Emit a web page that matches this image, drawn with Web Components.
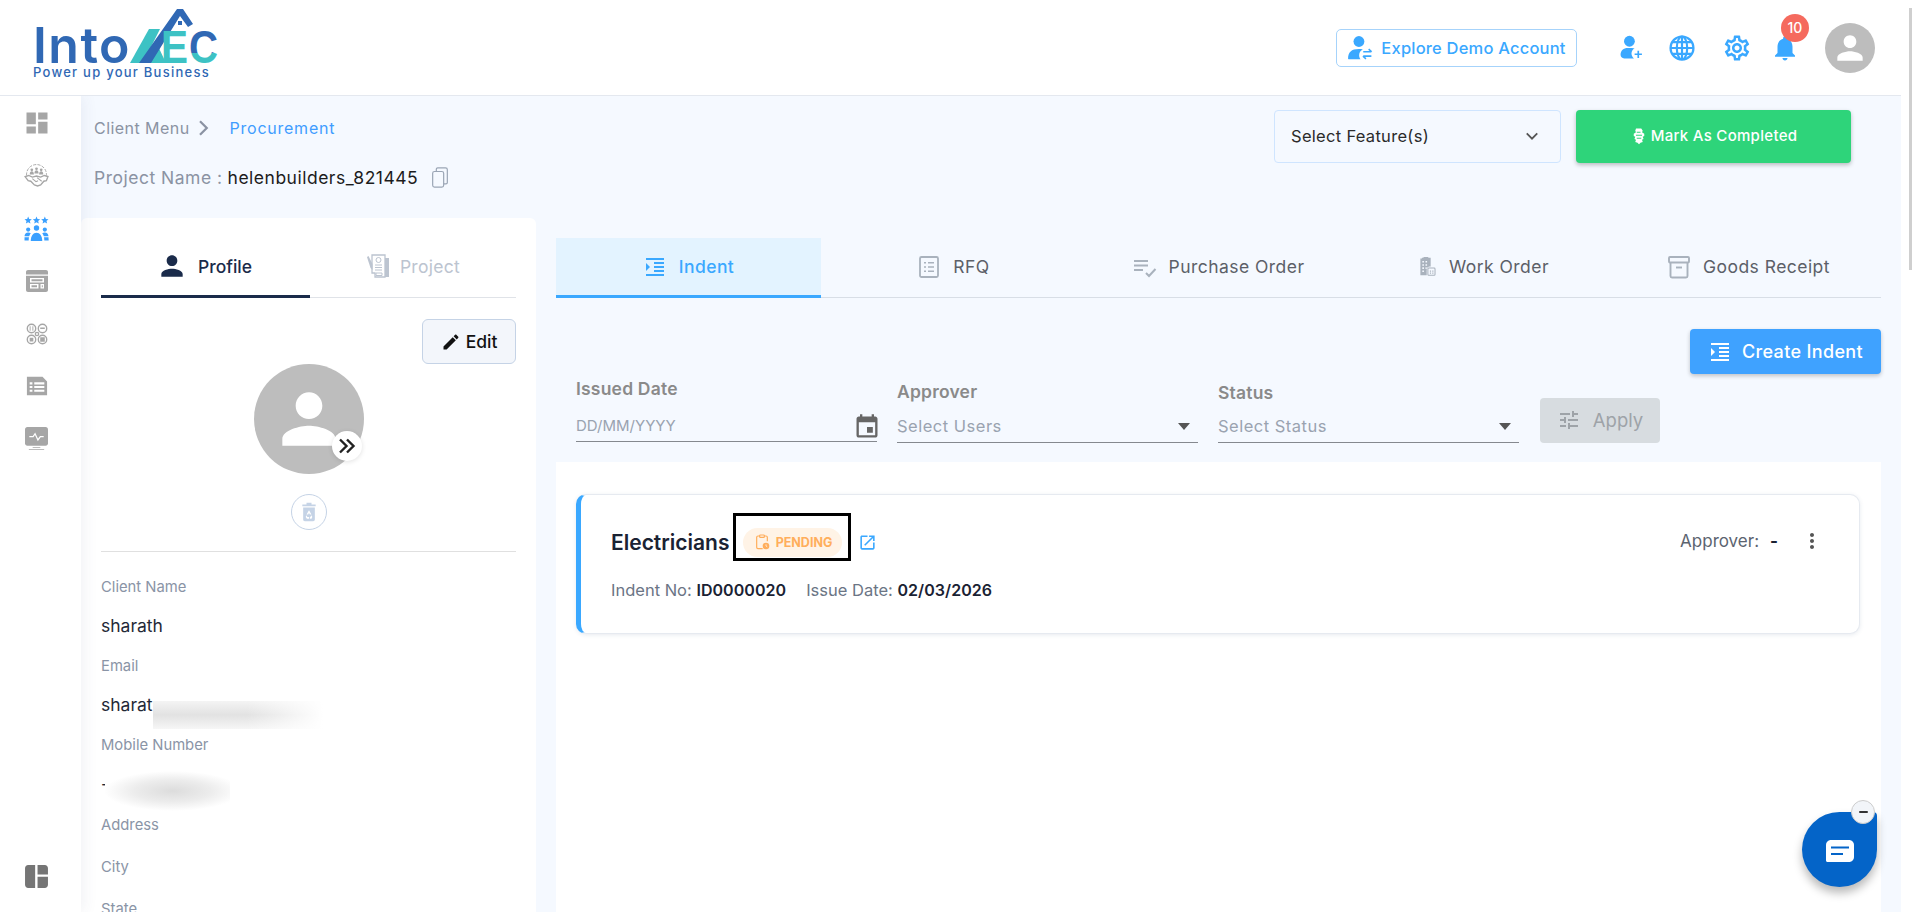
<!DOCTYPE html>
<html lang="en">
<head>
<meta charset="utf-8">
<title>Procurement</title>
<style>
    html, body { margin: 0; height: 912px; overflow: hidden; background: #fff; }
    body { font-family: Inter, "Liberation Sans", sans-serif; color: #1f2937; }
</style>
</head>
<body>
<app-shell>
    <app-header slot="header"></app-header>
    <side-nav slot="nav"></side-nav>
    <top-bar></top-bar>
    <div style="display:flex;gap:20px;padding-right:20px;height:694px;overflow:hidden">
        <profile-card></profile-card>
        <procure-panel></procure-panel>
    </div>
</app-shell>
<chat-fab></chat-fab>

<script>
// 图标集合
const ICONS = {
    person: '<path d="M12 12c2.21 0 4-1.79 4-4s-1.79-4-4-4-4 1.79-4 4 1.79 4 4 4zm0 2c-2.67 0-8 1.34-8 4v2h16v-2c0-2.66-5.33-4-8-4z"/>',
    edit: '<path d="M3 17.25V21h3.75L17.81 9.94l-3.75-3.75L3 17.25zM20.71 7.04c.39-.39.39-1.02 0-1.41l-2.34-2.34c-.39-.39-1.02-.39-1.41 0l-1.83 1.83 3.75 3.75 1.83-1.83z"/>',
    dashboard: '<path d="M3 13h8V3H3v10zm0 8h8v-6H3v6zm10 0h8V11h-8v10zm0-18v6h8V3h-8z"/>',
    event: '<path d="M17 12h-5v5h5v-5zM16 1v2H8V1H6v2H5c-1.11 0-1.99.9-1.99 2L3 19c0 1.1.89 2 2 2h14c1.1 0 2-.9 2-2V5c0-1.1-.9-2-2-2h-1V1h-2zm3 18H5V8h14v11z"/>',
    indent: '<path d="M3 21h18v-2H3v2zM3 8v8l4-4-4-4zm8 9h10v-2H11v2zM3 3v2h18V3H3zm8 6h10V7H11v2zm0 4h10v-2H11v2z"/>',
    tune: '<path d="M3 17v2h6v-2H3zM3 5v2h10V5H3zm10 16v-2h8v-2h-8v-2h-2v6h2zM7 9v2H3v2h4v2h2V9H7zm14 4v-2H11v2h10zm-6-4h2V7h4V5h-4V3h-2v6z"/>',
    open: '<path d="M19 19H5V5h7V3H5c-1.11 0-2 .9-2 2v14c0 1.1.89 2 2 2h14c1.1 0 2-.9 2-2v-7h-2v7zM14 3v2h3.59l-9.83 9.83 1.41 1.41L19 6.41V10h2V3h-7z"/>',
    more: '<path d="M12 8c1.1 0 2-.9 2-2s-.9-2-2-2-2 .9-2 2 .9 2 2 2zm0 2c-1.1 0-2 .9-2 2s.9 2 2 2 2-.9 2-2-.9-2-2-2zm0 6c-1.1 0-2 .9-2 2s.9 2 2 2 2-.9 2-2-.9-2-2-2z"/>',
    bell: '<path d="M12 22c1.1 0 2-.9 2-2h-4c0 1.1.89 2 2 2zm6-6v-5c0-3.07-1.64-5.64-4.5-6.32V4c0-.83-.67-1.5-1.5-1.5s-1.5.67-1.5 1.5v.68C7.63 5.36 6 7.92 6 11v5l-2 2v1h16v-1l-2-2z"/>',
    gear: '<path d="M19.43 12.98c.04-.32.07-.64.07-.98 0-.34-.03-.66-.07-.98l2.11-1.65c.19-.15.24-.42.12-.64l-2-3.46c-.09-.16-.26-.25-.44-.25-.06 0-.12.01-.17.03l-2.49 1c-.52-.4-1.08-.73-1.69-.98l-.38-2.65C14.46 2.18 14.25 2 14 2h-4c-.25 0-.46.18-.49.42l-.38 2.65c-.61.25-1.17.59-1.69.98l-2.49-1c-.06-.02-.12-.03-.18-.03-.17 0-.34.09-.43.25l-2 3.46c-.13.22-.07.49.12.64l2.11 1.65c-.04.32-.07.65-.07.98 0 .33.03.66.07.98l-2.11 1.65c-.19.15-.24.42-.12.64l2 3.46c.09.16.26.25.44.25.06 0 .12-.01.17-.03l2.49-1c.52.4 1.08.73 1.69.98l.38 2.65c.03.24.24.42.49.42h4c.25 0 .46-.18.49-.42l.38-2.65c.61-.25 1.17-.59 1.69-.98l2.49 1c.06.02.12.03.18.03.17 0 .34-.09.43-.25l2-3.46c.12-.22.07-.49-.12-.64l-2.11-1.65zm-1.98-1.71c.04.31.05.52.05.73 0 .21-.02.43-.05.73l-.14 1.13.89.7 1.08.84-.7 1.21-1.27-.51-1.04-.42-.9.68c-.43.32-.84.56-1.25.73l-1.06.43-.16 1.13-.2 1.35h-1.4l-.19-1.35-.16-1.13-1.06-.43c-.43-.18-.83-.41-1.23-.71l-.91-.7-1.06.43-1.27.51-.7-1.21 1.08-.84.89-.7-.14-1.13c-.03-.31-.05-.54-.05-.74s.02-.43.05-.73l.14-1.13-.89-.7-1.08-.84.7-1.21 1.27.51 1.04.42.9-.68c.43-.32.84-.56 1.25-.73l1.06-.43.16-1.13.2-1.35h1.39l.19 1.35.16 1.13 1.06.43c.43.18.83.41 1.23.71l.91.7 1.06-.43 1.27-.51.7 1.21-1.07.85-.89.7.14 1.13zM12 8c-2.21 0-4 1.79-4 4s1.79 4 4 4 4-1.79 4-4-1.79-4-4-4zm0 6c-1.1 0-2-.9-2-2s.9-2 2-2 2 .9 2 2-.9 2-2 2z"/>',
    globe: '<g fill="none" stroke="currentColor" stroke-width="2"><circle cx="12" cy="12" r="10.6"/><ellipse cx="12" cy="12" rx="4.8" ry="10.6"/><path d="M12 1.4v21.2M1.4 12h21.2M3 6.6h18M3 17.4h18"/></g>',
    userSwap: '<circle cx="11" cy="6" r="5"/><path d="M1 22c0-6 3-9 10-9 1.4 0 2.6.1 3.6.4-2.2.7-3.4 3.2-3.4 5.2 0 1.5.6 2.7 1.3 3.8H2.5C1.6 22.4 1 22.4 1 22z"/><path d="M15 15.5h7.5M20 13l2.8 2.5M15 19.5h7.5M17.5 22l-2.8-2.5" fill="none" stroke="currentColor" stroke-width="1.4"/>',
    userPlus: '<circle cx="10" cy="6" r="5.2"/><path d="M1.5 19c0-4 2.8-6.5 7-6.5h4c1 0 1.8.2 2.5.5-1.9.9-3 2.7-3 4.800 0 2 1 3.7 2.4 4.7H5c-2 0-3.500-1.500-3.500-3.500z"/><path d="M15 18.5h7M18.5 15v7" fill="none" stroke="currentColor" stroke-width="1.6"/>',
    copy: '<g fill="none" stroke="currentColor" stroke-width="1.3"><rect x="4" y="6" width="12" height="17" rx="2"/><path d="M8 6V3.5C8 2.7 8.7 2 9.5 2H18c1.1 0 2 .9 2 2v14c0 .8-.7 1.5-1.5 1.5H16"/></g>',
    chevronRight: '<path d="M8 3l9 9-9 9" fill="none" stroke="currentColor" stroke-width="3"/>',
    chevronDown: '<path d="M5 8.5l7 7 7-7" fill="none" stroke="currentColor" stroke-width="2.4"/>',
    handshakeTeam: '<circle cx="7.5" cy="6.5" r="1.3"/><circle cx="12" cy="5.5" r="1.3"/><circle cx="16.5" cy="6.5" r="1.3"/><path d="M5.5 11c0-2 .9-3 2-3s2 1 2 3zm4.5-1c0-2 .9-3 2-3s2 1 2 3zm4.5 1c0-2 .9-3 2-3s2 1 2 3z"/><path d="M2.5 12A9.5 9.5 0 0 1 12 1.5 9.5 9.5 0 0 1 21.5 12" fill="none" stroke="currentColor" stroke-width=".9" stroke-dasharray="3 1.2"/><path d="M1 13l3.5-1 3.5 1.5 4-1 4 1 3.5-1.5 3.5 1-1.5 4-2.5.5-3 3.5-3 1-3-1-3.5-3.5-2.5-.5z" fill="none" stroke="currentColor" stroke-width="1.3"/><path d="M8 15l3.5 3 2-1M12.5 14l4.5 3.5" fill="none" stroke="currentColor" stroke-width="1"/>',
    teamStars: '<path d="M4 .5l1 2.4 2.5.2-1.9 1.6.6 2.5L4 5.9 1.8 7.2l.6-2.500L.5 3.1 3 2.9zM12 .5l1 2.4 2.5.2-1.9 1.6.6 2.5L12 5.9 9.8 7.2l.6-2.500-1.900-1.600 2.500-.2zM20 .5l1 2.4 2.5.2-1.9 1.6.6 2.5L20 5.9l-2.2 1.3.6-2.500-1.900-1.600 2.500-.2z"/><circle cx="12" cy="11.5" r="2.6"/><path d="M6.5 24c0-5 2.3-8 5.5-8s5.5 3 5.5 8z"/><circle cx="4" cy="13" r="2"/><path d="M.5 19.5C.5 17 2 15.8 4 15.8c1 0 1.8.3 2.5.8-.8 1-1.2 1.9-1.5 2.9z"/><circle cx="20" cy="13" r="2"/><path d="M23.5 19.5C23.5 17 22 15.8 20 15.8c-1 0-1.8.3-2.5.8.8 1 1.2 1.9 1.5 2.9z"/><path d="M.5 20.5h4.3c-.2 1-.3 2-.3 3H.5zM23.5 20.5h-4.3c.2 1 .3 2 .3 3h4.2z"/>',
    webLayout: '<path fill-rule="evenodd" d="M3 1h18c1.1 0 2 .9 2 2v18c0 1.1-.9 2-2 2H3c-1.1 0-2-.9-2-2V3c0-1.1.9-2 2-2zM1 5.5v1.2h22V5.5zM5 9v4.5h14V9zm0 6v4.5h8.5V15zm10.500 0v4.5H19V15zM6.500 10.300h11v1.900h-11zm0 6h5.500v1.900H6.500zm10.300 0h1v1.900h-1z"/>',
    nodes: '<g fill="none" stroke="currentColor" stroke-width="1.5"><circle cx="6" cy="6" r="4.6"/><circle cx="18" cy="6" r="4.6"/><circle cx="6" cy="18" r="4.6"/><circle cx="18" cy="18" r="4.6"/><circle cx="12" cy="12" r="1.8"/></g><path d="M4 3.5h1v5H4zm3 0h1v5H7zM15.5 5h5v1.5h-5zM4 16h4v4.2H4zM15.5 15.5h5v5h-5z"/>',
    listFile: '<path fill-rule="evenodd" d="M1 2h17l5 5v15H1zM4 8v2.3h3V8zm5 0v2.3h11V8zM4 12v2.3h3V12zm5 0v2.3h11V12zM4 16v2.3h3V16zm5 0v2.3h11V16z"/>',
    monitor: '<path fill-rule="evenodd" d="M2.5 0h19C22.900 0 24 1.1 24 2.5V17c0 1.4-1.1 2.5-2.5 2.5h-19C1.1 19.5 0 18.4 0 17V2.5C0 1.1 1.1 0 2.5 0z"/><path d="M4.5 10h4l2-3 3 6.5 2.5-3.5h3.5" fill="none" stroke="#fff" stroke-width="1.3"/><path d="M8 21h8v.8H8zM4 23h16v.7H4z"/>',
    panels: '<path d="M4 1h6.7v22H4c-1.7 0-3-1.3-3-3V4c0-1.7 1.3-3 3-3zM13 1h7c1.7 0 3 1.3 3 3v6H13zM13 12.3h10V20c0 1.7-1.3 3-3 3h-7z"/>',
    projectDoc: '<path d="M6 1h13v22H9V19H6z" fill="none" stroke="currentColor" stroke-width="1.3"/><path d="M19 4h4v19h-4z"/><circle cx="12.5" cy="6" r="2.5" fill="none" stroke="currentColor"/><path d="M9 11h7M9 13.5h7M9 16h7M10 19h6v2.5h-6z" fill="none" stroke="currentColor"/><path d="M1 3l1.5-1 4 8v6l-2-2z"/>',
    listBox: '<rect x="3" y="2" width="18" height="20" rx="1.5" fill="none" stroke="currentColor" stroke-width="1.8"/><path d="M7 7h2v1.6H7zm4 0h6v1.6h-6zM7 11.2h2v1.6H7zm4 0h6v1.6h-6zM7 15.4h2V17H7zm4 0h6V17h-6z"/>',
    checkList: '<path d="M1 5h14v2H1zm0 4.5h14v2H1zM1 14h9v2H1z"/><path d="M13 18l3 3 6.5-7" fill="none" stroke="currentColor" stroke-width="2"/>',
    buildingDoc: '<path fill-rule="evenodd" d="M5 1h2V0h6v1h3v11h-2a4 4 0 0 0-3 4v7H3V2h2zM5.5 5v2h2V5zm4 0v2h2V5zm0 4v2h2V9zm-4 0v2h2V9zm0 4v2h2v-2zm4 0v2H11v-2zm-4 4v2h2v-2z"/><rect x="12.5" y="14" width="9" height="9" rx="1" fill="none" stroke="currentColor" stroke-width="1.3"/><path d="M15 17h1.5v1.5H15zm3 0h1.5v1.5H18zm-3 2.5h1.5V21H15zm3 0h1.5V21H18z"/>',
    archive: '<g fill="none" stroke="currentColor" stroke-width="1.9"><path d="M3.5 7.5V21c0 .8.7 1.5 1.5 1.5h14c.8 0 1.5-.7 1.5-1.5V7.5"/><rect x="2" y="2" width="20" height="5.5" rx="1"/><path d="M9 12.5h6"/></g>',
    pending: '<g fill="none" stroke="currentColor" stroke-width="1.8"><path d="M9 3H6C4.9 3 4 3.9 4 5v15c0 1.1.9 2 2 2h7M15 3h3c1.1 0 2 .9 2 2v6"/><rect x="8.5" y="1.5" width="7" height="3.5" rx="1"/></g><circle cx="18" cy="18" r="5"/><path d="M18 15.500V18l1.800 1.200" fill="none" stroke="#fff3e6" stroke-width="1.2"/>',
    recycleBin: '<path fill-rule="evenodd" d="M9 1h6v2h5v2H4V3h5zM5 6.5h14V21c0 1.1-.9 2-2 2H7c-1.1 0-2-.9-2-2zM12 10l-3 5h2l1-1.800L13 15h2zM9 16l-1 2 1.500 2H12v-2h-2zm6 0l-1.500 2H13v2h2l1-2z"/>',
    award: '<path d="M8 2h7l2 3-1 2 3 2v3l-2 1 1 3-2 1 1 3-3 1-2 2-2-2-3-1 1-3-2-1 1-3-2-1V9l3-2-1-2z"/><path d="M9 7h5M8 11h8M9 15h6" stroke="#2ed47a" stroke-width="1.3"/>'
};

// 单个图标
class UiIcon extends HTMLElement {
    constructor() {
        super();
        this.attachShadow({ mode: 'open' });
    }

    connectedCallback() {
        const size = this.getAttribute('size') || 24;
        const name = this.getAttribute('name');
        const color = this.getAttribute('color') || 'currentColor';
        this.shadowRoot.innerHTML = `
            <style>
                :host { display: inline-flex; flex: none; color: ${color}; line-height: 0; }
                svg { display: block; fill: currentColor; }
            </style>
            <svg width="${size}" height="${size}" viewBox="0 0 24 24">${ICONS[name] || ''}</svg>
        `;
    }
}

// 页面骨架
class AppShell extends HTMLElement {
    constructor() {
        super();
        this.attachShadow({ mode: 'open' });
        this.shadowRoot.innerHTML = `
            <style>
                :host { display: block; height: 912px; }
                .frame { display: flex; height: 912px; overflow: hidden; background: #fff; }
                .app { width: 1901px; flex: none; display: flex; flex-direction: column; }
                .row { flex: 1; display: flex; min-height: 0; }
                main { flex: 1; min-width: 0; background: #f5f9ff; }
                .scroll { flex: 1; padding: 8px 0 0 8px; }
                .thumb { width: 3px; height: 262px; background: #cfcfcf; }
            </style>
            <div class="frame">
                <div class="app">
                    <slot name="header"></slot>
                    <div class="row">
                        <slot name="nav"></slot>
                        <main><slot></slot></main>
                    </div>
                </div>
                <div class="scroll"><div class="thumb"></div></div>
            </div>
        `;
    }
}

class AppHeader extends HTMLElement {
    constructor() {
        super();
        this.attachShadow({ mode: 'open' });
        this.shadowRoot.innerHTML = `
            <style>
                :host { display: block; position: relative; z-index: 2; }
                .bar {
                    height: 95px;
                    border-bottom: 1px solid #e4e8ef;
                    background: #fff;
                    display: flex;
                    align-items: center;
                    padding: 0 26px 0 33px;
                    color: #3aa8ff;
                }
                .logo { align-self: flex-start; padding-top: 8px; }
                .logo-top { display: flex; align-items: flex-end; height: 58px; }
                .into {
                    width: 97px;
                    font-size: 50px;
                    font-weight: 600;
                    line-height: 40px;
                    margin-bottom: 1px;
                    color: #3068b4;
                    letter-spacing: 1.5px;
                }
                .logo svg { display: block; }
                .tag {
                    font-size: 13px;
                    line-height: 12px;
                    font-weight: 500;
                    letter-spacing: 1.25px;
                    color: #3068b4;
                    white-space: nowrap;
                }
                .spacer { flex: 1; }
                .demo {
                    width: 241px;
                    height: 38px;
                    box-sizing: border-box;
                    border: 1px solid #a6d3fb;
                    border-radius: 5px;
                    display: flex;
                    align-items: center;
                    justify-content: center;
                    gap: 8px;
                    font-size: 16.5px;
                    letter-spacing: 0.2px;
                    font-weight: 500;
                    white-space: nowrap;
                }
                .ic { display: flex; }
                .bell { position: relative; margin-left: 18px; display: flex; }
                .badge {
                    position: absolute;
                    left: 11px;
                    top: -19px;
                    width: 28px;
                    height: 28px;
                    border-radius: 50%;
                    background: #f56a5e;
                    color: #fff;
                    font-size: 14px;
                    font-weight: 500;
                    display: flex;
                    align-items: center;
                    justify-content: center;
                }
                .avatar {
                    margin-left: 25px;
                    width: 50px;
                    height: 50px;
                    border-radius: 50%;
                    background: #bdbdbd;
                    display: flex;
                    align-items: center;
                    justify-content: center;
                }
            </style>
            <div class="bar">
                <div class="logo">
                    <div class="logo-top">
                        <span class="into">Into</span>
                        <svg width="90" height="58" viewBox="130 8 90 58">
                            <defs>
                                <linearGradient id="cfill" x1="0" y1="0" x2="0" y2="1">
                                    <stop offset="0.62" stop-color="#3068b4"/>
                                    <stop offset="0.62" stop-color="#3dc2c4"/>
                                </linearGradient>
                            </defs>
                            <polygon points="130,63 149,29 160,29 143,63" fill="#3dc2c4"/>
                            <polygon points="157,44 166,63 147,63" fill="#3dc2c4"/>
                            <polygon points="139,63 177,9 183,9 193,24 188,27 180,16 151,63" fill="#3068b4"/>
                            <rect x="178" y="21" width="4" height="4" fill="#3068b4"/>
                            <text x="161" y="63" font-size="47" font-weight="700" fill="#3dc2c4" font-family="Liberation Sans" textLength="27" lengthAdjust="spacingAndGlyphs">E</text>
                            <text x="189" y="63" font-size="47" font-weight="700" fill="url(#cfill)" font-family="Liberation Sans" textLength="29" lengthAdjust="spacingAndGlyphs">C</text>
                        </svg>
                    </div>
                    <div class="tag">Power up your Business</div>
                </div>
                <div class="spacer"></div>
                <div class="demo"><ui-icon name="userSwap" size="26"></ui-icon>Explore Demo Account</div>
                <div class="ic" style="margin-left:42px"><ui-icon name="userPlus" size="25"></ui-icon></div>
                <div class="ic" style="margin-left:25px"><ui-icon name="globe" size="26"></ui-icon></div>
                <div class="ic" style="margin-left:27px"><ui-icon name="gear" size="30"></ui-icon></div>
                <div class="bell"><ui-icon name="bell" size="30"></ui-icon><span class="badge">10</span></div>
                <div class="avatar"><ui-icon name="person" size="38" color="#fff"></ui-icon></div>
            </div>
        `;
    }
}

class SideNav extends HTMLElement {
    constructor() {
        super();
        this.attachShadow({ mode: 'open' });
        this.shadowRoot.innerHTML = `
            <style>
                :host {
                    display: flex;
                    flex-direction: column;
                    width: 81px;
                    flex: none;
                    background: #fff;
                    box-shadow: 3px 0 14px rgba(50, 70, 120, 0.07);
                    position: relative;
                    z-index: 1;
                    color: #a6a6a6;
                }
                .item { height: 52.6px; display: flex; align-items: center; justify-content: center; padding-right: 8px; }
                .first { margin-top: 1px; }
                .bottom { margin-top: auto; margin-bottom: 9px; color: #757575; }
            </style>
            <div class="item first"><ui-icon name="dashboard" size="28"></ui-icon></div>
            <div class="item"><ui-icon name="handshakeTeam" size="25"></ui-icon></div>
            <div class="item"><ui-icon name="teamStars" size="25" color="#3aa0ff"></ui-icon></div>
            <div class="item"><ui-icon name="webLayout" size="24"></ui-icon></div>
            <div class="item"><ui-icon name="nodes" size="22"></ui-icon></div>
            <div class="item"><ui-icon name="listFile" size="22"></ui-icon></div>
            <div class="item"><ui-icon name="monitor" size="23"></ui-icon></div>
            <div class="item bottom"><ui-icon name="panels" size="25"></ui-icon></div>
        `;
    }
}

class TopBar extends HTMLElement {
    constructor() {
        super();
        this.attachShadow({ mode: 'open' });
        this.shadowRoot.innerHTML = `
            <style>
                :host {
                    display: flex;
                    height: 122px;
                    padding: 14px 50px 0 13px;
                    box-sizing: border-box;
                    font-size: 16px;
                    color: #8b93a3;
                }
                .left { flex: 1; }
                .crumb { display: flex; align-items: center; height: 20px; margin-top: 8px; white-space: nowrap; letter-spacing: 0.45px; }
                .crumb ui-icon { margin: 0 18px 0 4px; }
                .crumb b { font-weight: 400; color: #3f9dff; letter-spacing: 0.75px; }
                .project { display: flex; align-items: center; height: 24px; margin-top: 27px; white-space: nowrap; font-size: 17.5px; letter-spacing: 0.5px; }
                .project b { font-weight: 400; color: #1c1c1c; margin-left: 5px; }
                .project ui-icon { margin-left: 11px; }
                .select {
                    width: 287px;
                    height: 53px;
                    box-sizing: border-box;
                    border: 1px solid #cfe5ff;
                    border-radius: 4px;
                    display: flex;
                    align-items: center;
                    padding: 0 19px 2px 16px;
                    color: #2b2b2b;
                    font-size: 16.5px;
                    letter-spacing: 0.3px;
                    justify-content: space-between;
                }
                .done {
                    width: 275px;
                    height: 53px;
                    margin-left: 15px;
                    background: #2ed47a;
                    border-radius: 4px;
                    box-shadow: 0 2px 4px rgba(0, 0, 0, 0.25);
                    color: #fff;
                    display: flex;
                    align-items: center;
                    justify-content: center;
                    gap: 3px;
                    padding-bottom: 2px;
                    box-sizing: border-box;
                    font-size: 15px;
                    letter-spacing: 0.3px;
                    font-weight: 500;
                }
            </style>
            <div class="left">
                <div class="crumb">Client Menu<ui-icon name="chevronRight" size="18"></ui-icon><b>Procurement</b></div>
                <div class="project">Project Name :<b>helenbuilders_821445</b><ui-icon name="copy" size="22" color="#9aa5b5"></ui-icon></div>
            </div>
            <div class="select">Select Feature(s)<ui-icon name="chevronDown" size="18" color="#555"></ui-icon></div>
            <div class="done"><ui-icon name="award" size="18"></ui-icon>Mark As Completed</div>
        `;
    }
}

// 左侧资料卡的一行
class InfoField extends HTMLElement {
    constructor() {
        super();
        this.attachShadow({ mode: 'open' });
        this.shadowRoot.innerHTML = `
            <style>
                :host { display: block; height: var(--h, 42px); position: relative; }
                .label { font-size: 14.8px; line-height: 20px; color: #8a94a6; }
                .value { font-size: 17.5px; line-height: 22px; color: #1f2937; margin-top: 18px; }
            </style>
            <div class="label"><slot name="label"></slot></div>
            <div class="value"><slot></slot></div>
        `;
    }
}

class ProfileCard extends HTMLElement {
    constructor() {
        super();
        this.attachShadow({ mode: 'open' });
        this.shadowRoot.innerHTML = `
            <style>
                :host {
                    display: block;
                    width: 455px;
                    flex: none;
                    box-sizing: border-box;
                    background: #fff;
                    padding: 0 20px;
                    border-radius: 6px 6px 0 0;
                    overflow: hidden;
                    font-size: 17.5px;
                }
                .tabs { display: flex; height: 80px; border-bottom: 1px solid #e0e3e8; box-sizing: border-box; }
                .tab { flex: 1; display: flex; align-items: center; justify-content: center; gap: 10px; padding-top: 19px; font-weight: 500; margin-bottom: -1px; box-sizing: border-box; }
                .tab.on { color: #1a2b4a; border-bottom: 3px solid #1a2b4a; padding-right: 3px; }
                .tab.off { color: #bcc4d0; border-bottom: 3px solid transparent; font-weight: 400; letter-spacing: 0.3px; }
                .edit-row { display: flex; justify-content: flex-end; margin-top: 21px; }
                .edit {
                    width: 94px;
                    height: 45px;
                    box-sizing: border-box;
                    background: #f3f6fb;
                    border: 1px solid #c5d3e6;
                    border-radius: 6px;
                    display: flex;
                    align-items: center;
                    justify-content: center;
                    gap: 5px;
                    color: #111;
                    font-weight: 500;
                }
                .pic {
                    width: 110px;
                    height: 110px;
                    margin: 0 auto;
                    border-radius: 50%;
                    background: #bdbdbd;
                    position: relative;
                    display: flex;
                    align-items: center;
                    justify-content: center;
                }
                .next {
                    position: absolute;
                    right: 2px;
                    bottom: 13px;
                    width: 30px;
                    height: 30px;
                    border-radius: 50%;
                    background: #fff;
                    box-shadow: 0 1px 5px rgba(0, 0, 0, 0.12);
                    display: flex;
                    align-items: center;
                    justify-content: center;
                }
                .bin {
                    width: 36px;
                    height: 36px;
                    margin: 20px auto 0;
                    box-sizing: border-box;
                    border: 1px solid #c5d3e6;
                    border-radius: 50%;
                    display: flex;
                    align-items: center;
                    justify-content: center;
                }
                hr { border: 0; border-top: 1px solid #e0e0e0; margin: 21px 0 25px; }
                .smudge { position: absolute; }
                .smudge.mail {
                    left: 52px;
                    top: 45px;
                    width: 170px;
                    height: 28px;
                    background:
                        linear-gradient(90deg, rgba(255,255,255,0) 55%, #fff 100%),
                        linear-gradient(180deg, #f4f4f4 0%, #e2e2e2 50%, #f6f6f6 100%);
                }
                .smudge.phone {
                    left: 4px;
                    top: 36px;
                    width: 125px;
                    height: 40px;
                    background: radial-gradient(ellipse 55% 50% at 54% 50%, #dcdcdc 0%, #ececec 55%, #fff 100%);
                }
            </style>
            <div class="tabs">
                <div class="tab on"><ui-icon name="person" size="32"></ui-icon>Profile</div>
                <div class="tab off"><ui-icon name="projectDoc" size="24"></ui-icon>Project</div>
            </div>
            <div class="edit-row"><div class="edit"><ui-icon name="edit" size="20"></ui-icon>Edit</div></div>
            <div class="pic">
                <ui-icon name="person" size="80" color="#fff"></ui-icon>
                <div class="next"><svg width="18" height="16" viewBox="0 0 18 16" fill="none" stroke="#222" stroke-width="2.4"><path d="M2 1.5L8.5 8 2 14.5M9 1.5L15.5 8 9 14.5"/></svg></div>
            </div>
            <div class="bin"><ui-icon name="recycleBin" size="20" color="#c5d3e6"></ui-icon></div>
            <hr>
            <info-field style="--h:79px"><span slot="label">Client Name</span>sharath</info-field>
            <info-field style="--h:79px"><span slot="label">Email</span>sharat<div class="smudge mail"></div></info-field>
            <info-field style="--h:80px"><span slot="label">Mobile Number</span>-<div class="smudge phone"></div></info-field>
            <info-field><span slot="label">Address</span></info-field>
            <info-field><span slot="label">City</span></info-field>
            <info-field style="height:36px;overflow:hidden"><span slot="label">State</span></info-field>
        `;
    }
}

class ProcTab extends HTMLElement {
    constructor() {
        super();
        this.attachShadow({ mode: 'open' });
    }

    connectedCallback() {
        const active = this.hasAttribute('active');
        this.shadowRoot.innerHTML = `
            <style>
                :host {
                    flex: 1;
                    display: flex;
                    align-items: center;
                    justify-content: center;
                    gap: 12px;
                    font-size: 17.5px;
                    letter-spacing: 0.45px;
                    height: 60px;
                    box-sizing: border-box;
                    margin-bottom: -1px;
                    color: ${active ? '#3aa8ff' : '#5c6068'};
                    font-weight: ${active ? 500 : 400};
                    background: ${active ? '#e3f3ff' : 'transparent'};
                    border-bottom: 3px solid ${active ? '#3aa8ff' : 'transparent'};
                }
            </style>
            <ui-icon name="${this.getAttribute('icon')}" size="${this.getAttribute('size') || 24}" color="${active ? '#3aa8ff' : '#a9b2bd'}"></ui-icon>
            <slot></slot>
        `;
    }
}

class FilterField extends HTMLElement {
    constructor() {
        super();
        this.attachShadow({ mode: 'open' });
    }

    connectedCallback() {
        const isDate = this.getAttribute('kind') === 'date';
        const trail = isDate
            ? '<ui-icon name="event" size="28" color="#666"></ui-icon>'
            : '<span class="arrow"></span>';
        this.shadowRoot.innerHTML = `
            <style>
                :host { display: block; width: 301px; flex: none; }
                .label { font-size: 17.5px; letter-spacing: 0.2px; line-height: 20px; font-weight: 600; color: #8a8a8a; }
                .input {
                    display: flex;
                    align-items: flex-end;
                    justify-content: space-between;
                    border-bottom: 1px solid #85898f;
                    height: ${this.getAttribute('h') || 42}px;
                    box-sizing: border-box;
                    padding-bottom: ${isDate ? 5 : 6}px;
                    font-size: ${isDate ? '15px' : '16.5px'};
                    letter-spacing: ${isDate ? '0' : '0.5px'};
                    line-height: 20px;
                    color: #9aa3b0;
                }
                ui-icon { margin: 0 -4px -5px 0; }
                .arrow {
                    width: 0;
                    height: 0;
                    border-left: 6.5px solid transparent;
                    border-right: 6.5px solid transparent;
                    border-top: 7px solid #555;
                    margin: 0 8px 6px 0;
                }
            </style>
            <div class="label">${this.getAttribute('label')}</div>
            <div class="input"><span>${this.getAttribute('placeholder')}</span>${trail}</div>
        `;
    }
}

class IndentCard extends HTMLElement {
    constructor() {
        super();
        this.attachShadow({ mode: 'open' });
        this.shadowRoot.innerHTML = `
            <style>
                :host {
                    display: block;
                    width: 1284px;
                    height: 140px;
                    box-sizing: border-box;
                    background: #fff;
                    border: 1px solid #e6eaf0;
                    border-left: 5px solid #3aa8ff;
                    border-radius: 10px;
                    box-shadow: 0 1px 4px rgba(60, 80, 120, 0.12);
                    padding: 32px 35px 0 30px;
                }
                .head { display: flex; align-items: center; height: 30px; }
                .name { font-size: 21px; font-weight: 600; color: #1a2233; }
                .pill-wrap { position: relative; margin-left: 14px; }
                .pill {
                    width: 99px;
                    height: 29px;
                    box-sizing: border-box;
                    border-radius: 15px;
                    background: #fff3e6;
                    color: #ffae5c;
                    font-size: 12.5px;
                    font-weight: 700;
                    display: flex;
                    align-items: center;
                    justify-content: center;
                    gap: 6px;
                }
                .mark {
                    position: absolute;
                    left: -10px;
                    right: -9px;
                    top: -15px;
                    bottom: -4px;
                    border: 3px solid #000;
                    pointer-events: none;
                }
                .open { margin-left: 16px; }
                .right { margin-left: auto; display: flex; align-items: center; font-size: 17px; color: #5c6470; margin-top: -3px; }
                .right b { color: #1a2233; margin: 0 22px 0 11px; font-weight: 700; }
                .meta { display: flex; margin-top: 23px; font-size: 16.5px; line-height: 20px; color: #6b7585; white-space: pre; }
                .meta b { color: #1a2233; font-weight: 600; font-size: 16px; letter-spacing: 0.05px; }
                .meta span + span { margin-left: 20px; }
            </style>
            <div class="head">
                <span class="name">Electricians</span>
                <div class="pill-wrap">
                    <div class="pill"><ui-icon name="pending" size="16"></ui-icon>PENDING</div>
                    <div class="mark"></div>
                </div>
                <ui-icon class="open" name="open" size="19" color="#3aa8ff"></ui-icon>
                <div class="right">Approver:<b>-</b><ui-icon name="more" size="24" color="#555"></ui-icon></div>
            </div>
            <div class="meta"><span>Indent No: <b>ID0000020</b></span><span>Issue Date: <b>02/03/2026</b></span></div>
        `;
    }
}

class ProcurePanel extends HTMLElement {
    constructor() {
        super();
        this.attachShadow({ mode: 'open' });
        this.shadowRoot.innerHTML = `
            <style>
                :host { display: block; flex: 1; min-width: 0; padding-top: 20px; }
                .tabs { display: flex; border-bottom: 1px solid #d8dee6; height: 60px; box-sizing: border-box; }
                .actions { display: flex; justify-content: flex-end; margin-top: 31px; }
                .create {
                    width: 191px;
                    height: 45px;
                    background: #3fa2ff;
                    color: #fff;
                    border-radius: 4px;
                    box-shadow: 0 2px 4px rgba(0, 0, 0, 0.22);
                    display: flex;
                    align-items: center;
                    justify-content: center;
                    gap: 10px;
                    font-size: 18px;
                    letter-spacing: 0.35px;
                    font-weight: 500;
                }
                .filters { display: flex; align-items: flex-end; gap: 20px; padding-left: 20px; margin-top: 4px; height: 65px; }
                .apply {
                    width: 120px;
                    height: 45px;
                    margin-left: 1px;
                    padding-bottom: 2px;
                    box-sizing: border-box;
                    background: #d7dce0;
                    color: #9ea3a8;
                    border-radius: 4px;
                    display: flex;
                    align-items: center;
                    justify-content: center;
                    gap: 12px;
                    font-size: 18.5px;
                }
                .results { background: #fff; margin-top: 19px; padding: 32px 0 0 20px; height: 460px; }
            </style>
            <div class="tabs">
                <proc-tab icon="indent" active>Indent</proc-tab>
                <proc-tab icon="listBox">RFQ</proc-tab>
                <proc-tab icon="checkList">Purchase Order</proc-tab>
                <proc-tab icon="buildingDoc" size="19">Work Order</proc-tab>
                <proc-tab icon="archive">Goods Receipt</proc-tab>
            </div>
            <div class="actions"><div class="create"><ui-icon name="indent" size="24"></ui-icon>Create Indent</div></div>
            <div class="filters">
                <filter-field kind="date" label="Issued Date" placeholder="DD/MM/YYYY" h="43" style="margin-bottom:1px"></filter-field>
                <filter-field label="Approver" placeholder="Select Users" h="41"></filter-field>
                <filter-field label="Status" placeholder="Select Status" h="40"></filter-field>
                <div class="apply"><ui-icon name="tune" size="24"></ui-icon>Apply</div>
            </div>
            <div class="results"><indent-card></indent-card></div>
        `;
    }
}

class ChatFab extends HTMLElement {
    constructor() {
        super();
        this.attachShadow({ mode: 'open' });
        this.shadowRoot.innerHTML = `
            <style>
                :host {
                    position: fixed;
                    right: 43px;
                    bottom: 25px;
                    width: 75px;
                    height: 75px;
                    background: #0464c8;
                    border-radius: 50% 4px 50% 50%;
                    box-shadow: 0 6px 10px rgba(0, 0, 0, 0.28);
                    display: flex;
                    align-items: center;
                    justify-content: center;
                    z-index: 5;
                }
                .min {
                    position: absolute;
                    top: -12px;
                    right: 2px;
                    width: 24px;
                    height: 24px;
                    box-sizing: border-box;
                    background: #f2f5f9;
                    border: 1px solid #ccc;
                    border-radius: 50%;
                    display: flex;
                    align-items: center;
                    justify-content: center;
                }
                .min i { width: 9px; height: 2px; background: #333; border-radius: 1px; }
            </style>
            <svg width="28" height="22" viewBox="0 0 28 22" style="margin-top:3px">
                <path d="M5 0h18c2.8 0 5 2.2 5 5v12c0 2.8-2.2 5-5 5H1.5C.7 22 0 21.3 0 20.5V5c0-2.8 2.2-5 5-5z" fill="#fff"/>
                <path d="M5 7.5h18M5 14h12" stroke="#0464c8" stroke-width="2"/>
            </svg>
            <div class="min"><i></i></div>
        `;
    }
}

customElements.define('ui-icon', UiIcon);
customElements.define('app-shell', AppShell);
customElements.define('app-header', AppHeader);
customElements.define('side-nav', SideNav);
customElements.define('top-bar', TopBar);
customElements.define('info-field', InfoField);
customElements.define('profile-card', ProfileCard);
customElements.define('proc-tab', ProcTab);
customElements.define('filter-field', FilterField);
customElements.define('indent-card', IndentCard);
customElements.define('procure-panel', ProcurePanel);
customElements.define('chat-fab', ChatFab);
</script>
</body>
</html>
